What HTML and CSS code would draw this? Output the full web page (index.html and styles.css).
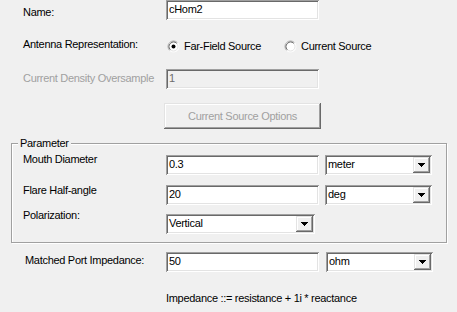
FILE: index.html
```html
<!DOCTYPE html>
<html>
<head>
<meta charset="utf-8">
<link rel="stylesheet" href="styles.css">
</head>
<body>
<div class="form">
  <div class="row row-name">
    <span class="lbl lbl-name">Name:</span>
    <div class="field w-main"><span class="val">cHom2</span></div>
  </div>

  <div class="row row-ant">
    <span class="lbl lbl-ant">Antenna Representation:</span>
    <div class="radios">
      <span class="radio radio-first">
        <svg width="13" height="13" viewBox="0 0 13 13">
          <circle cx="6.5" cy="6.5" r="5.5" fill="#fff" stroke="#fff"/>
          <path d="M2.61 10.39 A5.5 5.5 0 0 1 10.39 2.61" fill="none" stroke="#a0a0a0"/>
          <circle cx="6.5" cy="6.5" r="4.5" fill="#fff" stroke="#e3e3e3"/>
          <path d="M3.32 9.68 A4.5 4.5 0 0 1 9.68 3.32" fill="none" stroke="#696969"/>
          <circle cx="6.5" cy="6.5" r="2" fill="#000"/>
        </svg>
        <span class="rtext">Far-Field Source</span>
      </span>
      <span class="radio">
        <svg width="13" height="13" viewBox="0 0 13 13">
          <circle cx="6.5" cy="6.5" r="5.5" fill="#fff" stroke="#fff"/>
          <path d="M2.61 10.39 A5.5 5.5 0 0 1 10.39 2.61" fill="none" stroke="#a0a0a0"/>
          <circle cx="6.5" cy="6.5" r="4.5" fill="#fff" stroke="#e3e3e3"/>
          <path d="M3.32 9.68 A4.5 4.5 0 0 1 9.68 3.32" fill="none" stroke="#696969"/>
        </svg>
        <span class="rtext">Current Source</span>
      </span>
    </div>
  </div>

  <div class="row row-over">
    <span class="lbl lbl-over disabled">Current Density Oversample</span>
    <div class="field w-main field-disabled"><span class="val val-disabled">1</span></div>
  </div>

  <div class="row row-btn">
    <div class="button">Current Source Options</div>
  </div>

  <fieldset class="group">
    <legend class="legend">Parameter</legend>
    <div class="row row-mouth">
      <span class="lbl glbl lbl-mouth">Mouth Diameter</span>
      <div class="field w-main"><span class="val">0.3</span></div>
      <div class="combo w-unit gap7">
        <span class="val">meter</span>
        <span class="drop"><svg width="7" height="4" viewBox="0 0 7 4" shape-rendering="crispEdges"><rect x="0" y="0" width="7" height="1"/><rect x="1" y="1" width="5" height="1"/><rect x="2" y="2" width="3" height="1"/><rect x="3" y="3" width="1" height="1"/></svg></span>
      </div>
    </div>
    <div class="row row-flare">
      <span class="lbl glbl lbl-flare">Flare Half-angle</span>
      <div class="field w-main"><span class="val">20</span></div>
      <div class="combo w-unit gap7">
        <span class="val">deg</span>
        <span class="drop"><svg width="7" height="4" viewBox="0 0 7 4" shape-rendering="crispEdges"><rect x="0" y="0" width="7" height="1"/><rect x="1" y="1" width="5" height="1"/><rect x="2" y="2" width="3" height="1"/><rect x="3" y="3" width="1" height="1"/></svg></span>
      </div>
    </div>
    <div class="row row-pol">
      <span class="lbl glbl lbl-pol">Polarization:</span>
      <div class="combo w-pol">
        <span class="val">Vertical</span>
        <span class="drop"><svg width="7" height="4" viewBox="0 0 7 4" shape-rendering="crispEdges"><rect x="0" y="0" width="7" height="1"/><rect x="1" y="1" width="5" height="1"/><rect x="2" y="2" width="3" height="1"/><rect x="3" y="3" width="1" height="1"/></svg></span>
      </div>
    </div>
  </fieldset>

  <div class="row row-imp">
    <span class="lbl lbl-imp">Matched Port Impedance:</span>
    <div class="field w-main"><span class="val">50</span></div>
    <div class="combo w-unit gap8">
      <span class="val">ohm</span>
      <span class="drop"><svg width="7" height="4" viewBox="0 0 7 4" shape-rendering="crispEdges"><rect x="0" y="0" width="7" height="1"/><rect x="1" y="1" width="5" height="1"/><rect x="2" y="2" width="3" height="1"/><rect x="3" y="3" width="1" height="1"/></svg></span>
    </div>
  </div>

  <div class="note">Impedance ::= resistance + 1i * reactance</div>
</div>
</body>
</html>
```

FILE: styles.css
```css
html, body {
  margin: 0;
  padding: 0;
  background: #f0f0f0;
}

body {
  font-family: "Liberation Sans", Arial, sans-serif;
  font-size: 11px;
  line-height: 13px;
  letter-spacing: -0.3px;
  color: #000;
  width: 457px;
  height: 312px;
  overflow: hidden;
}

.form {
  display: flex;
  flex-direction: column;
}

.row {
  display: flex;
  align-items: flex-start;
}

.lbl {
  box-sizing: border-box;
  flex: 0 0 166px;
  padding-left: 23px;
  white-space: nowrap;
}

.glbl {
  flex-basis: 154px;
  padding-left: 11px;
}

.disabled {
  color: #a0a0a0;
}

/* row positions */
.row-name { margin-top: 0; height: 20px; }
.lbl-name { margin-top: 6px; }

.row-ant { margin-top: 19px; height: 13px; }
.lbl-ant { margin-top: -1px; }

.row-over { margin-top: 17px; height: 20px; }
.lbl-over { margin-top: 3px; }

.row-btn { margin-top: 14px; }

.row-mouth { margin-top: 5px; height: 20px; }
.lbl-mouth { margin-top: -2px; }

.row-flare { margin-top: 10px; height: 20px; }
.lbl-flare { margin-top: -1px; }

.row-pol { margin-top: 9px; height: 20px; }
.lbl-pol { margin-top: -5px; }

.row-imp { margin-top: 9px; height: 20px; }
.lbl-imp { margin-top: 2px; padding-left: 25px; }

/* sunken text field */
.field, .combo {
  box-sizing: border-box;
  height: 20px;
  background: #fff;
  padding: 3px 3px 0 3px;
  box-shadow:
    inset 1px 1px 0 #a0a0a0,
    inset -1px -1px 0 #fff,
    inset 2px 2px 0 #696969,
    inset -2px -2px 0 #e3e3e3;
  white-space: nowrap;
  overflow: hidden;
}

.field-disabled {
  background: #f0f0f0;
}

.val-disabled {
  color: #6d6d6d;
}

.w-main { width: 153px; }
.w-unit { width: 107px; }
.w-pol  { width: 149px; }

.gap7 { margin-left: 6px; }
.gap8 { margin-left: 7px; }

.combo {
  display: flex;
  justify-content: space-between;
  padding: 0 2px 0 3px;
  align-items: flex-start;
}

.combo .val {
  margin-top: 3px;
}

.drop {
  box-sizing: border-box;
  flex: 0 0 17px;
  height: 16px;
  margin-top: 2px;
  background: #f0f0f0;
  display: flex;
  align-items: center;
  justify-content: center;
  box-shadow:
    inset -1px -1px 0 #696969,
    inset 1px 1px 0 #e3e3e3,
    inset -2px -2px 0 #a0a0a0,
    inset 2px 2px 0 #fff;
}

.drop svg {
  display: block;
  fill: #000;
}

/* radios */
.radios {
  display: flex;
  align-items: center;
  margin-left: 1px;
}

.radio {
  display: flex;
  align-items: center;
  gap: 4px;
  white-space: nowrap;
}

.radio svg {
  display: block;
  flex: 0 0 13px;
}

.radio-first {
  width: 117px;
}

.rtext {
  margin-top: 1px;
}

/* button */
.button {
  box-sizing: border-box;
  margin-left: 164px;
  width: 157px;
  height: 26px;
  display: flex;
  align-items: center;
  justify-content: center;
  color: #a0a0a0;
  background: #f0f0f0;
  box-shadow:
    inset -1px -1px 0 #696969,
    inset 1px 1px 0 #e3e3e3,
    inset -2px -2px 0 #a0a0a0,
    inset 2px 2px 0 #fff;
}

/* group box */
.group {
  box-sizing: border-box;
  margin: 8px 0 0 11px;
  padding: 0 0 8px 0;
  width: 436px;
  min-width: 0;
  border: 1px solid #a0a0a0;
  box-shadow: 1px 1px 0 #fff, inset 1px 1px 0 #fff;
}

.legend {
  margin-left: 6px;
  padding: 0 2px;
  background: #f0f0f0;
  line-height: 13px;
}

.note {
  margin-top: 20px;
  margin-left: 166px;
  white-space: nowrap;
}
```
